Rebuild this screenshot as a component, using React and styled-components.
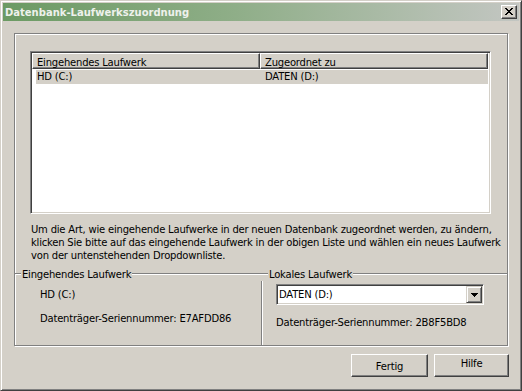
import React from "react";
import styled, { createGlobalStyle } from "styled-components";

const GlobalStyle = createGlobalStyle`
  html, body { margin: 0; padding: 0; background: #d4d0c8; }
  body { font-family: "DejaVu Sans", Tahoma, sans-serif; font-size: 10px; }
`;

const Window = styled.div`
  box-sizing: border-box;
  width: 522px;
  height: 391px;
  background: #d4d0c8;
  border: 1px solid;
  border-color: #d4d0c8 #404040 #404040 #d4d0c8;
  box-shadow: inset 1px 1px 0 #fff, inset -1px -1px 0 #808080;
  padding: 2px;
  display: flex;
  flex-direction: column;
  font-family: "DejaVu Sans", Tahoma, sans-serif;
  font-size: 10px;
  letter-spacing: -0.2px;
  color: #000;
`;

const TitleBar = styled.div`
  height: 18px;
  flex: none;
  display: flex;
  align-items: center;
  justify-content: space-between;
  padding: 0 2px 0 2px;
  background: linear-gradient(to right, #6b9a63 0%, #8fae88 45%, #c3c6c2 100%);
`;

const TitleText = styled.span`
  font-weight: bold;
  font-size: 10px;
  letter-spacing: 0;
  color: #eef1ec;
  line-height: 18px;
  padding-top: 1px;
`;

const CloseButton = styled.div`
  box-sizing: border-box;
  width: 16px;
  height: 14px;
  background: #d4d0c8;
  border: 1px solid;
  border-color: #fff #404040 #404040 #fff;
  box-shadow: inset -1px -1px 0 #808080;
  display: flex;
  align-items: center;
  justify-content: center;
  padding: 0 1px 1px 0;
`;

const Body = styled.div`
  flex: 1;
  display: flex;
  flex-direction: column;
  padding: 12px 11px 0 11px;
`;

const Frame = styled.div`
  box-sizing: border-box;
  height: 313px;
  border: 1px solid #808080;
  box-shadow: inset 1px 1px 0 #fff, 1px 1px 0 #fff;
  display: flex;
  flex-direction: column;
`;

const TopSection = styled.div`
  padding: 17px 16px 0 15px;
`;

const ListView = styled.div`
  box-sizing: border-box;
  width: 461px;
  height: 163px;
  border: 1px solid;
  border-color: #808080 #fff #fff #808080;
  box-shadow: inset 1px 1px 0 #404040, inset -1px -1px 0 #d4d0c8;
  padding: 1px;
  background: #fff;
`;

const HeaderRow = styled.div`
  display: flex;
  height: 16px;
`;

const HeaderCell = styled.div`
  box-sizing: border-box;
  width: 228px;
  height: 16px;
  background: #d4d0c8;
  border: 1px solid;
  border-color: #fff #404040 #404040 #fff;
  box-shadow: inset -1px -1px 0 #808080;
  padding: 2px 0 0 4px;
  line-height: 13px;
  white-space: nowrap;
`;

const ListRow = styled.div`
  display: flex;
  margin: 1px 0 0 4px;
  width: 452px;
  height: 14px;
  background: ${(p) => (p.$selected ? "#d4d0c8" : "transparent")};
`;

const RowCell = styled.div`
  width: ${(p) => p.$width}px;
  padding-left: ${(p) => p.$pad}px;
  box-sizing: border-box;
  line-height: 14px;
  white-space: nowrap;
`;

const Paragraph = styled.p`
  margin: 9px 0 0 1px;
  line-height: 13px;
  white-space: nowrap;
`;

const LowerRow = styled.div`
  flex: 1;
  display: grid;
  grid-template-columns: 248px 1fr;
  margin-top: 5px;
`;

const Group = styled.div`
  display: flex;
  flex-direction: column;
`;

const GroupHeader = styled.div`
  display: flex;
  height: 14px;
  flex: none;
`;

const EtchLine = styled.div`
  height: 0;
  margin-top: 6px;
  border-top: 1px solid #808080;
  border-bottom: 1px solid #fff;
  ${(p) => (p.$width ? `width: ${p.$width}px; flex: none;` : "flex: 1;")}
`;

const Legend = styled.span`
  line-height: 14px;
  padding: 1px 1px 0 1px;
  white-space: nowrap;
`;

const GroupBody = styled.div`
  flex: 1;
  padding: ${(p) => p.$padding};
  ${(p) =>
    p.$divider
      ? "border-right: 1px solid #fff; box-shadow: inset -1px 0 0 #808080;"
      : ""}
`;

const InfoLine = styled.div`
  line-height: 13px;
  margin-top: ${(p) => p.$top || 0}px;
  white-space: nowrap;
`;

const Dropdown = styled.div`
  box-sizing: border-box;
  width: 208px;
  height: 21px;
  border: 1px solid;
  border-color: #808080 #fff #fff #808080;
  box-shadow: inset 1px 1px 0 #404040, inset -1px -1px 0 #d4d0c8;
  padding: 1px;
  background: #fff;
  display: flex;
  align-items: center;
`;

const DropdownValue = styled.span`
  flex: 1;
  line-height: 17px;
  padding-left: 1px;
`;

const DropButton = styled.div`
  box-sizing: border-box;
  width: 16px;
  height: 17px;
  background: #d4d0c8;
  border: 1px solid;
  border-color: #d4d0c8 #404040 #404040 #d4d0c8;
  box-shadow: inset 1px 1px 0 #fff, inset -1px -1px 0 #808080;
  display: flex;
  align-items: center;
  justify-content: center;
`;

const ButtonRow = styled.div`
  display: flex;
  justify-content: flex-end;
  gap: 6px;
  margin: 8px -1px 0 0;
`;

const PushButton = styled.div`
  box-sizing: border-box;
  width: ${(p) => p.$width}px;
  height: 23px;
  background: #d4d0c8;
  border: 1px solid;
  border-color: #fff #404040 #404040 #fff;
  box-shadow: inset -1px -1px 0 #808080;
  text-align: center;
  line-height: 13px;
  padding-top: ${(p) => p.$textTop}px;
`;

const CloseIcon = () => (
  <svg width="8" height="7" viewBox="0 0 8 7" shapeRendering="crispEdges">
    <g fill="#000">
      <rect x="0" y="0" width="2" height="1" />
      <rect x="6" y="0" width="2" height="1" />
      <rect x="1" y="1" width="2" height="1" />
      <rect x="5" y="1" width="2" height="1" />
      <rect x="2" y="2" width="4" height="1" />
      <rect x="3" y="3" width="2" height="1" />
      <rect x="2" y="4" width="4" height="1" />
      <rect x="1" y="5" width="2" height="1" />
      <rect x="5" y="5" width="2" height="1" />
      <rect x="0" y="6" width="2" height="1" />
      <rect x="6" y="6" width="2" height="1" />
    </g>
  </svg>
);

const ArrowIcon = () => (
  <svg width="7" height="4" viewBox="0 0 7 4" shapeRendering="crispEdges">
    <g fill="#000">
      <rect x="0" y="0" width="7" height="1" />
      <rect x="1" y="1" width="5" height="1" />
      <rect x="2" y="2" width="3" height="1" />
      <rect x="3" y="3" width="1" height="1" />
    </g>
  </svg>
);

export default function App() {
  return (
    <>
      <GlobalStyle />
      <Window>
        <TitleBar>
          <TitleText>Datenbank-Laufwerkszuordnung</TitleText>
          <CloseButton>
            <CloseIcon />
          </CloseButton>
        </TitleBar>
        <Body>
          <Frame>
            <TopSection>
              <ListView>
                <HeaderRow>
                  <HeaderCell>Eingehendes Laufwerk</HeaderCell>
                  <HeaderCell>Zugeordnet zu</HeaderCell>
                </HeaderRow>
                <ListRow $selected>
                  <RowCell $width={224} $pad={1}>HD (C:)</RowCell>
                  <RowCell $width={228} $pad={5}>DATEN (D:)</RowCell>
                </ListRow>
              </ListView>
              <Paragraph>
                Um die Art, wie eingehende Laufwerke in der neuen Datenbank zugeordnet werden, zu ändern,
                <br />
                klicken Sie bitte auf das eingehende Laufwerk in der obigen Liste und wählen ein neues Laufwerk
                <br />
                von der untenstehenden Dropdownliste.
              </Paragraph>
            </TopSection>
            <LowerRow>
              <Group>
                <GroupHeader>
                  <EtchLine $width={6} />
                  <Legend>Eingehendes Laufwerk</Legend>
                  <EtchLine />
                </GroupHeader>
                <GroupBody $divider $padding="7px 0 0 25px">
                  <InfoLine>HD (C:)</InfoLine>
                  <InfoLine $top={11}>Datenträger-Seriennummer: E7AFDD86</InfoLine>
                </GroupBody>
              </Group>
              <Group>
                <GroupHeader>
                  <EtchLine $width={5} />
                  <Legend>Lokales Laufwerk</Legend>
                  <EtchLine />
                </GroupHeader>
                <GroupBody $padding="3px 0 0 13px">
                  <Dropdown>
                    <DropdownValue>DATEN (D:)</DropdownValue>
                    <DropButton>
                      <ArrowIcon />
                    </DropButton>
                  </Dropdown>
                  <InfoLine $top={11}>Datenträger-Seriennummer: 2B8F5BD8</InfoLine>
                </GroupBody>
              </Group>
            </LowerRow>
          </Frame>
          <ButtonRow>
            <PushButton $width={77} $textTop={5}>Fertig</PushButton>
            <PushButton $width={75} $textTop={2}>Hilfe</PushButton>
          </ButtonRow>
        </Body>
      </Window>
    </>
  );
}
